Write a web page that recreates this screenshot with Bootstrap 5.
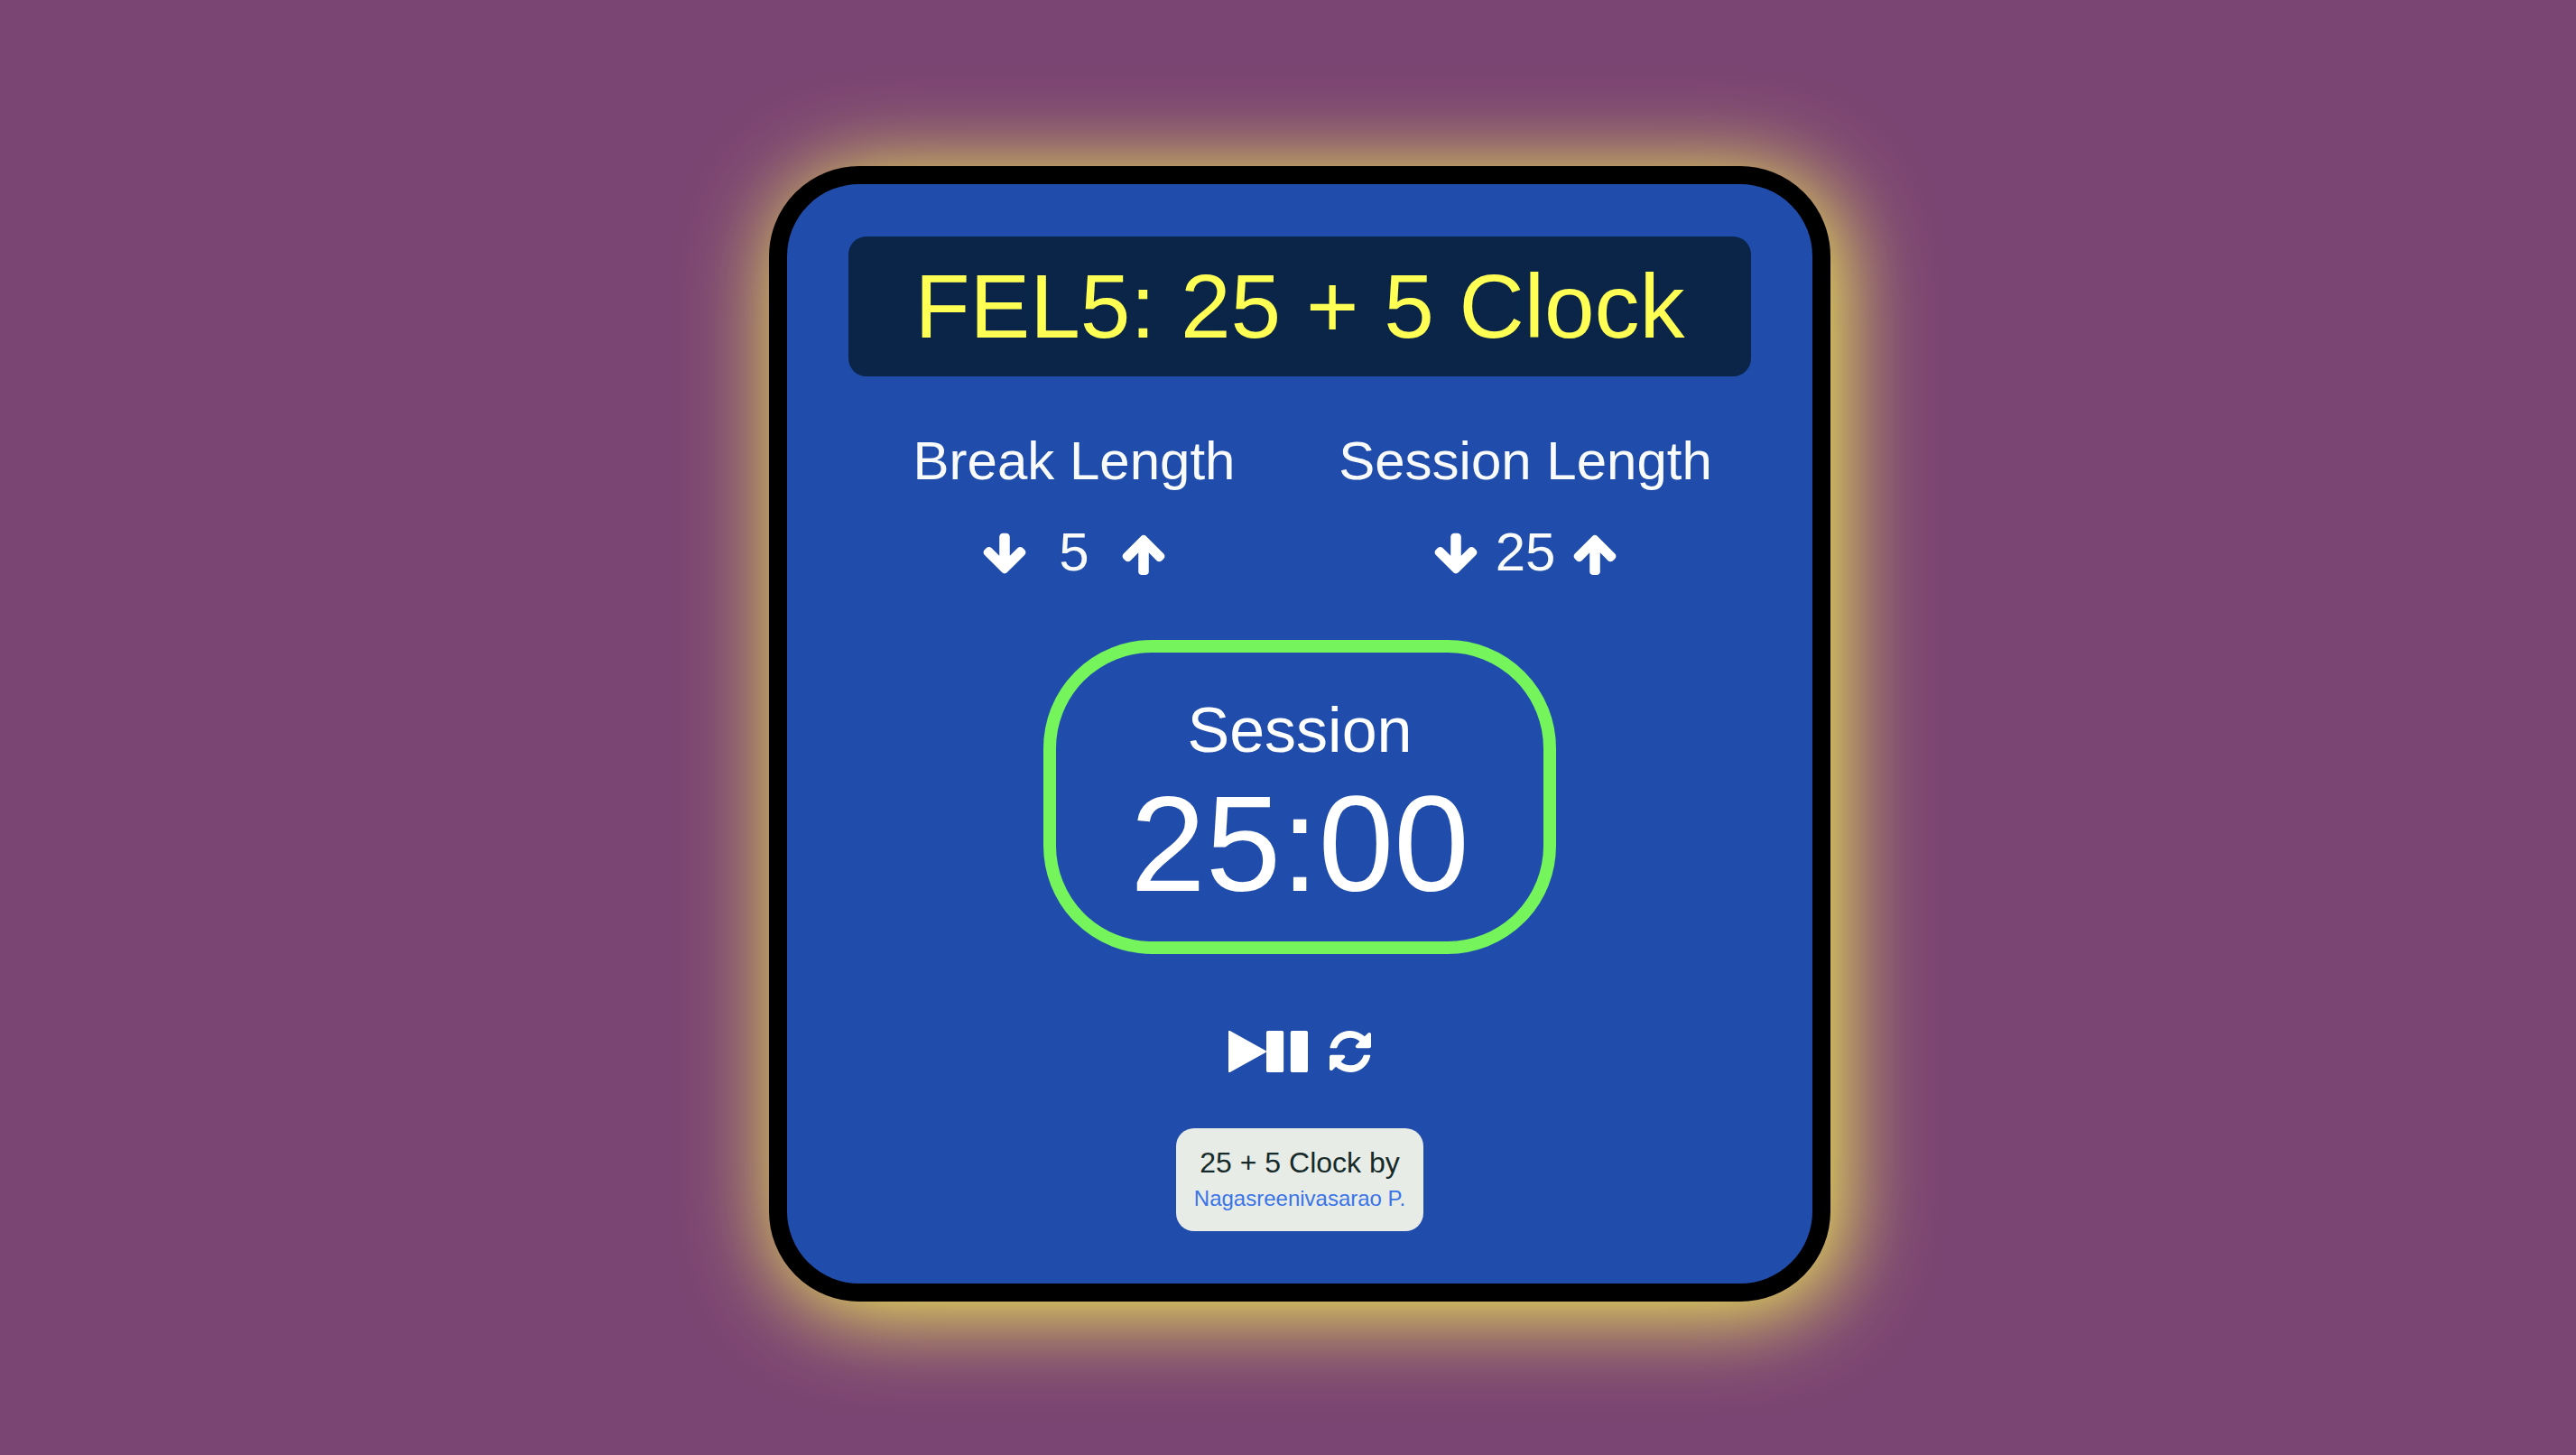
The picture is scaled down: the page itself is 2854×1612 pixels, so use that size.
<!DOCTYPE html>
<html lang="en">
<head>
<meta charset="utf-8">
<meta name="viewport" content="width=device-width, initial-scale=1">
<title>25 + 5 Clock</title>
<link href="https://cdn.jsdelivr.net/npm/bootstrap@5.3.0/dist/css/bootstrap.min.css" rel="stylesheet">
<style>
body { background: #7b4573; font-family: Arial, "Liberation Sans", sans-serif; }
.page-wrap { padding: 14px 0 0 26px; }
.clock-panel { width: 100%; max-width: 1176px; padding: 58px 68px; border: 20px solid #000; border-radius: 100px; background: #204dab; box-shadow: 10px 10px 100px #ffff54; }
.clock-title { padding: 20px; margin-bottom: 59px; border-radius: 20px; background: #0b2548; color: #ffff54; font-size: 100px; line-height: 115px; font-weight: 400; }
.length-text { color: #f9fbfb; font-size: 60px; line-height: 70px; font-weight: 400; }
.length-title { margin-bottom: 31px; }
.length-value { width: 104px; }
.icon-btn { color: #fff; background: none; }
.icon-btn svg { display: block; fill: currentColor; }
.timer-ring { margin-top: 62px; padding: 45px 82px 23px; border: 14px solid #75f45c; border-radius: 120px; }
.timer-name { font-size: 70px; line-height: 82px; font-weight: 400; }
.timer-left { font-size: 150px; line-height: 170px; }
.timer-controls { gap: 24px; margin-top: 85px; }
.credit { margin-top: 62px; padding: 20px 20px 22px; border-radius: 20px; background: #e7ece6; color: #162a2a; font-size: 32px; line-height: 36px; }
.credit a { margin-top: 8px; color: #3b74e6; font-size: 24px; line-height: 28px; }
</style>
</head>
<body>
<div class="page-wrap min-vh-100 d-flex align-items-center justify-content-center">
  <main class="clock-panel d-flex flex-column align-items-center text-center">
    <h1 class="clock-title w-100">FEL5: 25 + 5 Clock</h1>

    <div class="row g-0 w-100">
      <section class="col-6">
        <h2 class="length-text length-title">Break Length</h2>
        <div class="d-flex align-items-center justify-content-center">
          <button type="button" class="icon-btn border-0 p-0" aria-label="Decrease break length">
            <svg width="50" height="54" viewBox="0 -64 1664 1792"><path d="M1611 832q0 53-37 90l-651 652q-39 37-91 37-53 0-90-37l-651-652q-38-36-38-90 0-53 38-91l74-75q39-37 91-37 53 0 90 37l294 294v-704q0-52 38-90t90-38h128q52 0 90 38t38 90v704l294-294q37-37 90-37 52 0 91 37l75 75q37 39 37 91z"/></svg>
          </button>
          <span class="length-text length-value">5</span>
          <button type="button" class="icon-btn border-0 p-0" aria-label="Increase break length">
            <svg width="50" height="54" viewBox="0 -64 1664 1792"><path d="M1611 971q0 51-37 90l-75 75q-38 38-91 38-54 0-90-38l-294-293v704q0 52-37.500 84.500t-90.500 32.500h-128q-53 0-90.500-32.500t-37.500-84.500v-704l-294 293q-36 38-90 38t-90-38l-75-75q-38-38-38-90 0-53 38-91l651-651q35-37 90-37 54 0 91 37l651 651q37 39 37 91z"/></svg>
          </button>
        </div>
      </section>
      <section class="col-6">
        <h2 class="length-text length-title">Session Length</h2>
        <div class="d-flex align-items-center justify-content-center">
          <button type="button" class="icon-btn border-0 p-0" aria-label="Decrease session length">
            <svg width="50" height="54" viewBox="0 -64 1664 1792"><path d="M1611 832q0 53-37 90l-651 652q-39 37-91 37-53 0-90-37l-651-652q-38-36-38-90 0-53 38-91l74-75q39-37 91-37 53 0 90 37l294 294v-704q0-52 38-90t90-38h128q52 0 90 38t38 90v704l294-294q37-37 90-37 52 0 91 37l75 75q37 39 37 91z"/></svg>
          </button>
          <span class="length-text length-value">25</span>
          <button type="button" class="icon-btn border-0 p-0" aria-label="Increase session length">
            <svg width="50" height="54" viewBox="0 -64 1664 1792"><path d="M1611 971q0 51-37 90l-75 75q-38 38-91 38-54 0-90-38l-294-293v704q0 52-37.500 84.500t-90.500 32.500h-128q-53 0-90.500-32.500t-37.500-84.500v-704l-294 293q-36 38-90 38t-90-38l-75-75q-38-38-38-90 0-53 38-91l651-651q35-37 90-37 54 0 91 37l651 651q37 39 37 91z"/></svg>
          </button>
        </div>
      </section>
    </div>

    <section class="timer-ring text-white">
      <h2 class="timer-name mb-0">Session</h2>
      <div class="timer-left">25:00</div>
    </section>

    <div class="timer-controls d-flex">
      <button type="button" class="icon-btn border-0 p-0 d-flex" aria-label="Start or pause">
        <svg width="42" height="46" viewBox="192 128 1408 1536"><path d="M1576 927l-1328 738q-23 13-39.500 3t-16.500-36v-1472q0-26 16.500-36t39.500 3l1328 738q23 13 23 31t-23 31z"/></svg>
        <svg width="46" height="46" viewBox="128 128 1536 1536"><path d="M1664 192v1408q0 26-19 45t-45 19h-512q-26 0-45-19t-19-45v-1408q0-26 19-45t45-19h512q26 0 45 19t19 45zm-896 0v1408q0 26-19 45t-45 19h-512q-26 0-45-19t-19-45v-1408q0-26 19-45t45-19h512q26 0 45 19t19 45z"/></svg>
      </button>
      <button type="button" class="icon-btn border-0 p-0" aria-label="Reset">
        <svg width="46" height="46" viewBox="128 128 1536 1536"><path d="M1639 1056q0 5-1 7-64 268-268 434.500t-478 166.500q-146 0-282.500-55t-243.500-157l-129 129q-19 19-45 19t-45-19-19-45v-448q0-26 19-45t45-19h448q26 0 45 19t19 45-19 45l-137 137q71 66 161 102t187 36q134 0 250-65t186-179q11-17 53-117 8-23 30-23h192q13 0 22.500 9.500t9.500 22.500zm25-800v448q0 26-19 45t-45 19h-448q-26 0-45-19t-19-45 19-45l138-138q-148-137-349-137-134 0-250 65t-186 179q-11 17-53 117-8 23-30 23h-199q-13 0-22.500-9.500t-9.500-22.500v-7q65-268 270-434.500t480-166.500q146 0 284 55.500t245 156.500l130-129q19-19 45-19t45 19 19 45z"/></svg>
      </button>
    </div>

    <footer class="credit">25 + 5 Clock by
      <a class="d-block text-decoration-none" href="#">Nagasreenivasarao P.</a>
    </footer>
  </main>
</div>
<script src="https://cdn.jsdelivr.net/npm/bootstrap@5.3.0/dist/js/bootstrap.bundle.min.js"></script>
</body>
</html>
